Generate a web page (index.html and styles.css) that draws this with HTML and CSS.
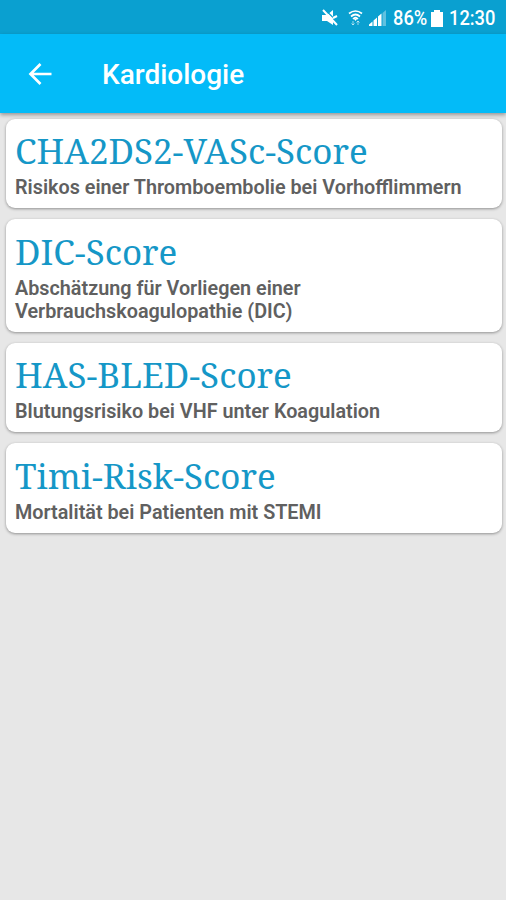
FILE: index.html
```
<!DOCTYPE html>
<html lang="de">
<head>
    <meta charset="UTF-8">
    <meta name="viewport" content="width=device-width, initial-scale=1.0">
    <title>Kardiologie</title>
    <link rel="stylesheet" href="styles.css">
</head>
<body>
    <div class="statusbar">
        <svg class="mute" width="18" height="18" viewBox="0 0 18 18">
            <path d="M1 6h5l6-5v15l-6-4H1z" fill="#fff"/>
            <path d="M3.500 0l14 14" stroke="#0aa0d0" stroke-width="1.200"/>
            <path d="M2 1l14 15M12 9l4-2" stroke="#fff" stroke-width="2"/>
        </svg>
        <svg class="wifi" width="15" height="18" viewBox="0 0 15 18">
            <path d="M1 4.500q6.500-5 13 0M3 7.500q4.500-4 9 0M5 10q2.500-2.500 5 0" fill="none" stroke="#fff" stroke-width="1.700"/>
            <path d="M6 10h3l-1.500 2z" fill="#fff"/>
            <path d="M5 12v4M3.500 14.500L5 16l1.500-1.500M10 16v-4M8.500 13.500L10 12l1.500 1.500" fill="none" stroke="#fff" stroke-width="1" opacity=".6"/>
        </svg>
        <svg class="signal" width="18" height="18" viewBox="0 0 18 18">
            <path d="M0 17v-1.500l3.500-3V17zM4.500 17v-5.500L8 8.500V17zM9 17V7.500l3.500-3V17z" fill="#fff"/>
            <path d="M13.500 17V4L17 1v16z" fill="#fff" opacity=".35"/>
        </svg>
        <span class="percent">86%</span>
        <svg class="battery" width="12" height="17" viewBox="0 0 12 17">
            <path d="M3 0h6v2h3v15H0V2h3z" fill="#fff"/>
        </svg>
        <span class="time">12:30</span>
    </div>
    <div class="navbar">
        <svg class="back" width="24" height="24" viewBox="0 0 24 24">
            <path d="M23.500 12H3M12.500 2L2.500 12l10 10" fill="none" stroke="#fff" stroke-width="2.700"/>
        </svg>
        <h1>Kardiologie</h1>
    </div>
    <div class="list">
        <div class="card">
            <h2>CHA2DS2-VASc-Score</h2>
            <p>Risikos einer Thromboembolie bei Vorhofflimmern</p>
        </div>
        <div class="card tall">
            <h2>DIC-Score</h2>
            <p>Abschätzung für Vorliegen einer<br>Verbrauchskoagulopathie (DIC)</p>
        </div>
        <div class="card">
            <h2>HAS-BLED-Score</h2>
            <p>Blutungsrisiko bei VHF unter Koagulation</p>
        </div>
        <div class="card">
            <h2>Timi-Risk-Score</h2>
            <p>Mortalität bei Patienten mit STEMI</p>
        </div>
    </div>
</body>
</html>
```
FILE: styles.css
```
* {
    box-sizing: border-box;
    margin: 0;
    padding: 0;
}

body {
    height: 900px;
    background-color: #e7e7e7;
    font-family: Roboto, sans-serif;
    overflow: hidden;
}

.statusbar {
    height: 34px;
    background-color: #0aa0d0;
    color: #fff;
    display: flex;
    align-items: center;
    justify-content: flex-end;
    padding: 1px 10px 0 0;
    font-size: 21px;
    font-weight: 500;
}

.mute {
    margin-right: 9px;
}

.wifi {
    margin-right: 6px;
}

.signal {
    margin-right: 6px;
}

.percent,
.time {
    transform: scaleX(0.87);
    transform-origin: left;
    white-space: nowrap;
}

.percent {
    width: 35px;
}

.battery {
    margin: 1px 6px 0 3px;
}

.time {
    width: 47px;
}

.navbar {
    height: 79px;
    background-color: #03bbf8;
    box-shadow: 0 2px 4px rgba(0, 0, 0, 0.35);
    display: flex;
    align-items: center;
    padding-left: 28px;
}

.navbar h1 {
    margin: 2px 0 0 50px;
    color: #fff;
    font-size: 28px;
    font-weight: 500;
}

.list {
    padding: 5.5px 4.5px 0 6px;
    display: flex;
    flex-direction: column;
    gap: 11px;
}

.card {
    height: 89.5px;
    padding: 8.5px 9px;
    background-color: #fff;
    border-radius: 9px;
    box-shadow: 0 1px 3px rgba(0, 0, 0, 0.38);
}

.card.tall {
    height: 112.5px;
}

.card h2 {
    height: 49px;
    line-height: 48px;
    color: #1597c7;
    font-family: "Noto Serif", "DejaVu Serif Condensed", "DejaVu Serif", serif;
    font-size: 35px;
    font-stretch: condensed;
    font-weight: 400;
    white-space: nowrap;
}

.card p {
    color: #606060;
    font-size: 19.8px;
    font-weight: 600;
    line-height: 23px;
    white-space: nowrap;
}
```
